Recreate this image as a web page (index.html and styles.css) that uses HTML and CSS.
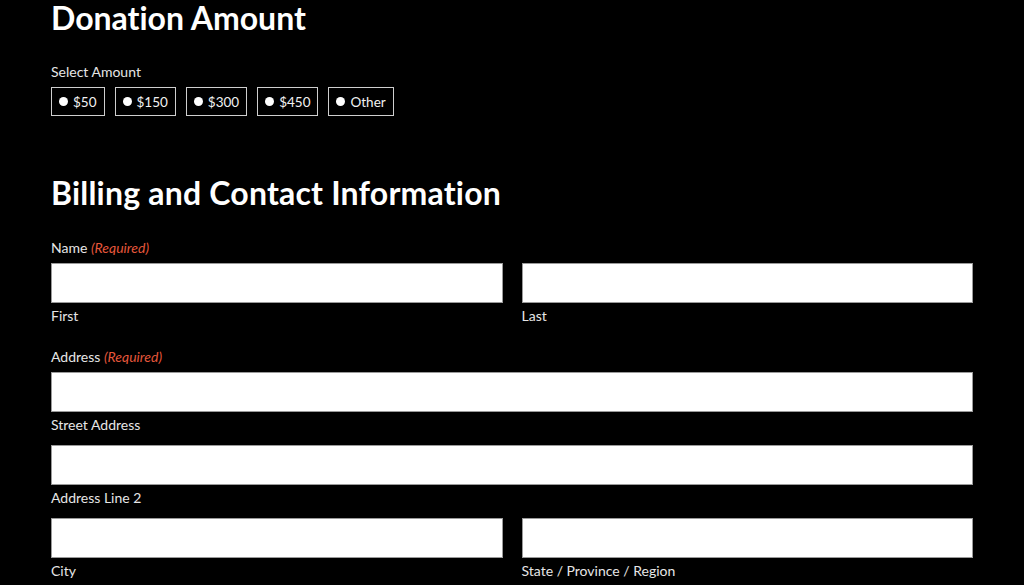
FILE: index.html
```html
<!DOCTYPE html>
<html lang="en">
<head>
<meta charset="utf-8">
<title>Donation Form</title>
<link rel="stylesheet" href="styles.css">
</head>
<body>
<div class="wrap">
  <h2 class="title title-first">Donation Amount</h2>
  <div class="field field-amount">
    <div class="label">Select Amount</div>
    <div class="choices">
      <label class="choice"><span class="dot"></span>$50</label>
      <label class="choice"><span class="dot"></span>$150</label>
      <label class="choice"><span class="dot"></span>$300</label>
      <label class="choice"><span class="dot"></span>$450</label>
      <label class="choice"><span class="dot"></span>Other</label>
    </div>
  </div>

  <h2 class="title title-second">Billing and Contact Information</h2>

  <div class="field field-name">
    <div class="label">Name <em class="req">(Required)</em></div>
    <div class="row two">
      <div class="cell"><div class="input"></div><div class="sub">First</div></div>
      <div class="cell"><div class="input"></div><div class="sub">Last</div></div>
    </div>
  </div>

  <div class="field field-address">
    <div class="label">Address <em class="req">(Required)</em></div>
    <div class="row"><div class="cell"><div class="input"></div><div class="sub">Street Address</div></div></div>
    <div class="row"><div class="cell"><div class="input"></div><div class="sub">Address Line 2</div></div></div>
    <div class="row two">
      <div class="cell"><div class="input"></div><div class="sub">City</div></div>
      <div class="cell"><div class="input"></div><div class="sub">State / Province / Region</div></div>
    </div>
  </div>
</div>
</body>
</html>
```
FILE: styles.css
```css
html, body {
  margin: 0;
  padding: 0;
  background: #000;
}
body {
  font-family: Lato, "Noto Sans", sans-serif;
  color: #e6e6e6;
  font-size: 14px;
}
.wrap {
  width: 922px;
  padding: 0 51px;
}
.title {
  margin: 0;
  font-family: Lato, "Noto Sans", sans-serif;
  font-weight: 700;
  font-size: 32px;
  line-height: 36px;
  color: #fff;
  font-variant-ligatures: none;
}
.title-first {
  margin-top: 0;
}
.title-second {
  margin-top: 59px;
  letter-spacing: 0.2px;
}
.field-amount {
  margin-top: 27px;
}
.label {
  line-height: 18px;
  color: #e6e6e6;
}
.req {
  color: #e5573b;
  font-style: italic;
}
.choices {
  display: flex;
  gap: 10px;
  margin-top: 6px;
}
.choice {
  display: flex;
  align-items: center;
  height: 27px;
  padding: 0 7px;
  border: 1px solid #cfcfcf;
  font-size: 13.5px;
  color: #f2f2f2;
}
.dot {
  width: 9px;
  height: 9px;
  border-radius: 50%;
  background: #fff;
  margin-right: 5px;
}
.field-name {
  margin-top: 28px;
}
.field-address {
  margin-top: 23px;
}
.row {
  display: flex;
  gap: 19px;
  margin-top: 6px;
}
.row + .row {
  margin-top: 11px;
}
.cell {
  flex: 1;
}
.input {
  height: 38px;
  background: #fff;
  border: 1px solid #9a9a9a;
}
.sub {
  line-height: 18px;
  margin-top: 4px;
  color: #e6e6e6;
}
```
